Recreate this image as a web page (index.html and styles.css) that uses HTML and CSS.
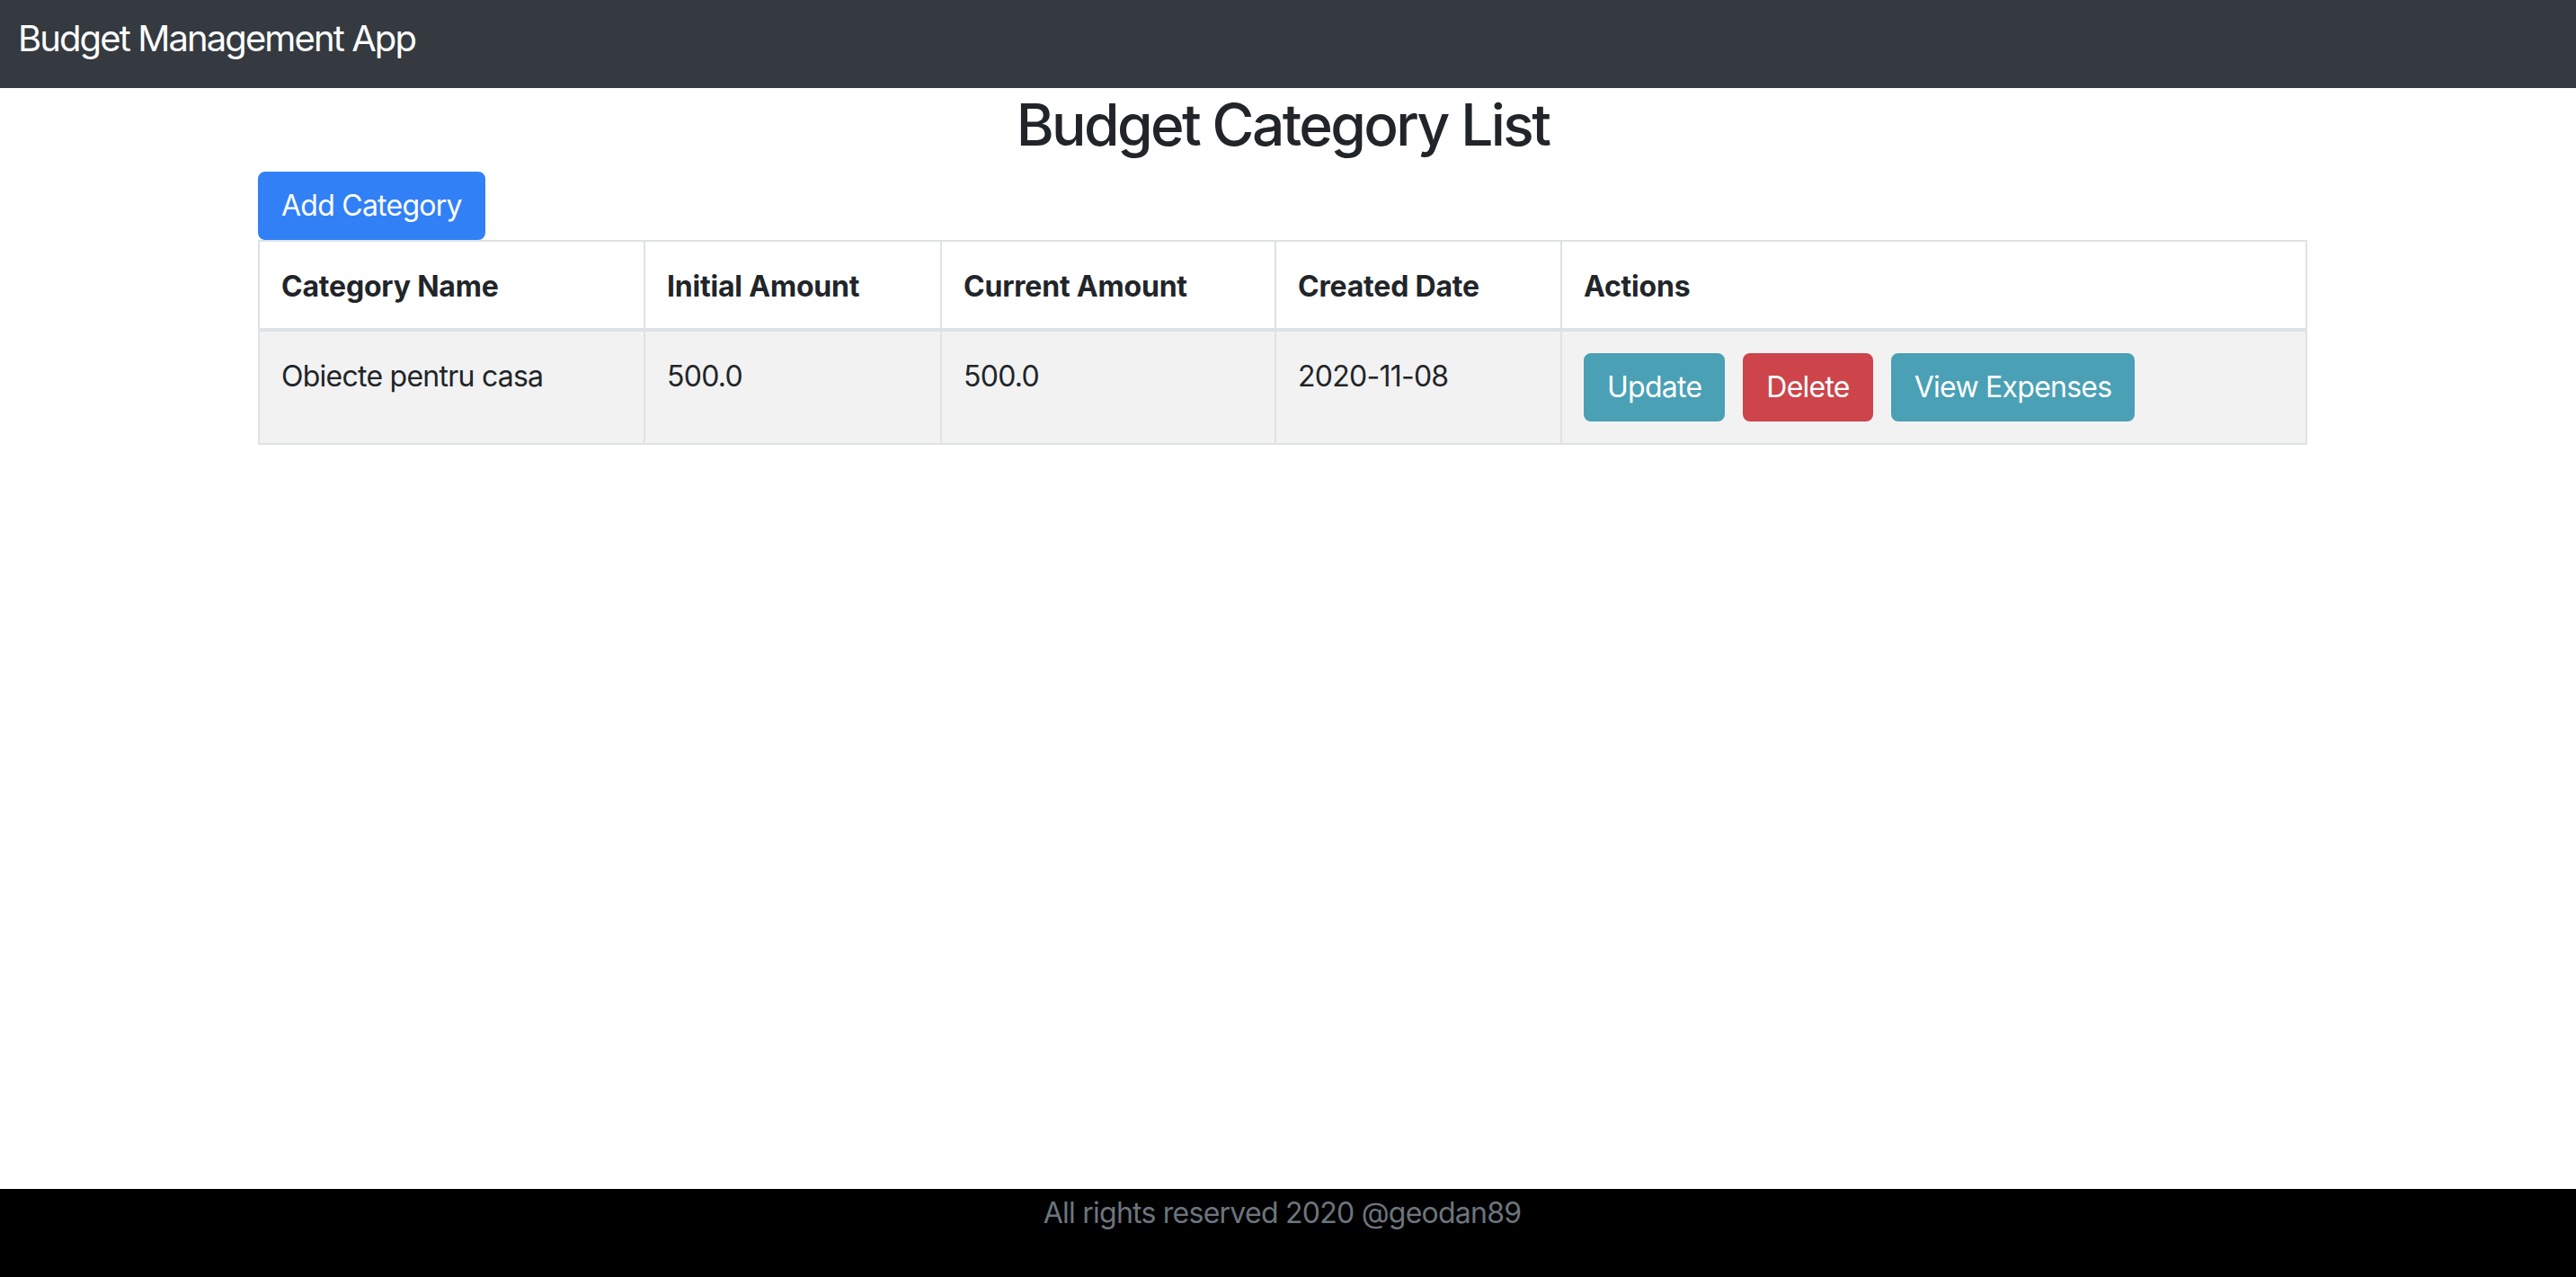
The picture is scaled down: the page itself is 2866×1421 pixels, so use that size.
FILE: index.html
```html
<!DOCTYPE html>
<html lang="en">
<head>
<meta charset="utf-8">
<title>Budget Management App</title>
<link rel="stylesheet" href="styles.css">
</head>
<body>
<nav class="navbar">
  <span class="brand">Budget Management App</span>
</nav>
<main class="container">
  <h2 class="title">Budget Category List</h2>
  <button class="btn btn-primary">Add Category</button>
  <table class="table">
    <thead>
      <tr>
        <th class="col-name">Category Name</th>
        <th class="col-initial">Initial Amount</th>
        <th class="col-current">Current Amount</th>
        <th class="col-date">Created Date</th>
        <th class="col-actions">Actions</th>
      </tr>
    </thead>
    <tbody>
      <tr class="odd">
        <td>Obiecte pentru casa</td>
        <td>500.0</td>
        <td>500.0</td>
        <td>2020-11-08</td>
        <td>
          <div class="actions">
            <button class="btn btn-info">Update</button>
            <button class="btn btn-danger">Delete</button>
            <button class="btn btn-info">View Expenses</button>
          </div>
        </td>
      </tr>
    </tbody>
  </table>
</main>
<footer class="footer">
  <span class="footer-text">All rights reserved 2020 @geodan89</span>
</footer>
</body>
</html>
```
FILE: styles.css
```css
* { box-sizing: border-box; }
html, body { margin: 0; padding: 0; }
body {
  font-family: Inter, "Noto Sans", "Liberation Sans", sans-serif;
  font-size: 32px;
  line-height: 1.5;
  letter-spacing: -0.75px;
  color: #212529;
  background: #fff;
  min-height: 1421px;
  display: flex;
  flex-direction: column;
}
.navbar {
  height: 98px;
  background: #343a40;
  padding: 13px 20px 0;
}
.brand {
  color: #fff;
  font-size: 40px;
  line-height: 60px;
  letter-spacing: -1.9px;
  display: block;
}
.container {
  width: 2280px;
  margin-left: 287px;
  flex: 1;
}
.title {
  margin: 0 0 16px;
  padding-top: 4px;
  font-size: 64px;
  font-weight: 500;
  line-height: 73px;
  letter-spacing: -2.6px;
  text-align: center;
}
.btn {
  font-family: inherit;
  font-size: 32px;
  line-height: 48px;
  letter-spacing: -0.75px;
  padding: 12px 24px;
  border: 2px solid transparent;
  border-radius: 8px;
  color: #fff;
  cursor: pointer;
}
.btn-primary { background: #3180f6; border-color: #3180f6; display: block; }
.btn-info { background: #4aa0b5; border-color: #4aa0b5; }
.btn-danger { background: #cd444b; border-color: #cd444b; }
.table {
  width: 100%;
  border-collapse: collapse;
  border: 2px solid #dee2e6;
}
.table th, .table td {
  border: 2px solid #dee2e6;
  padding: 26px 24px 22px;
  text-align: left;
  vertical-align: top;
}
.table td:last-child { padding-top: 24px; padding-bottom: 24px; }
.table th { font-weight: 700; border-bottom-width: 4px; letter-spacing: -0.2px; }
.table tr.odd { background: #f2f2f2; }
.col-name { width: 429px; }
.col-initial { width: 330px; }
.col-current { width: 372px; }
.col-date { width: 318px; }
.actions { display: flex; gap: 20px; }
.footer {
  height: 98px;
  background: #000;
  text-align: center;
  padding: 3px 13px 0 0;
}
.footer-text {
  color: #6c757d;
  font-size: 32px;
  line-height: 48px;
}
```
